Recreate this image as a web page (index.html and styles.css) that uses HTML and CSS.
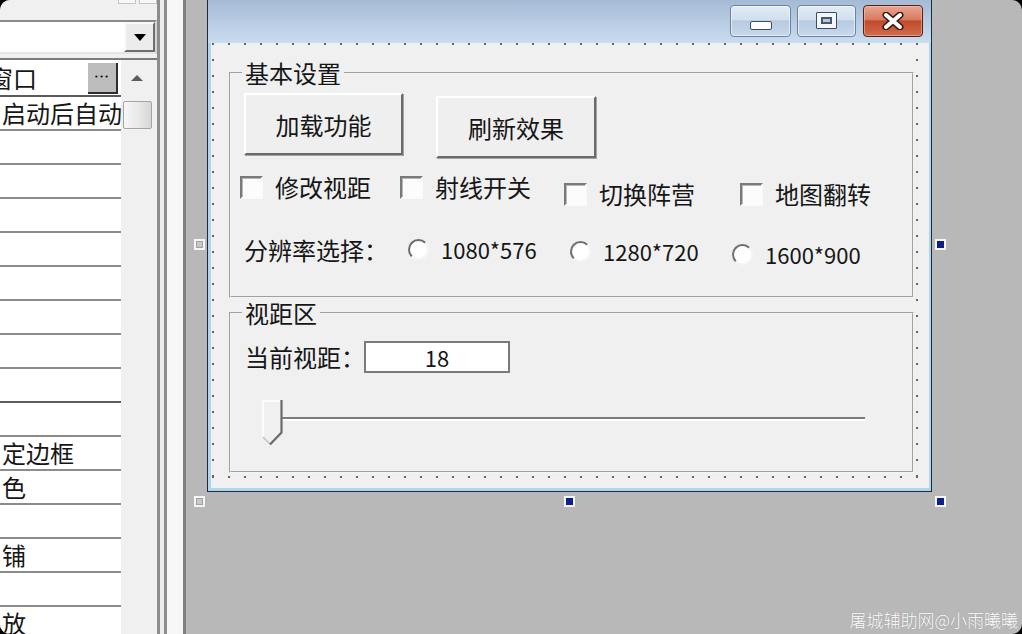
FILE: index.html
```html
<!DOCTYPE html>
<html lang="zh-CN">
<head>
  <meta charset="UTF-8">
  <title>窗口设计器</title>
  <meta name="viewport" content="width=device-width, initial-scale=1.0">
  <link rel="stylesheet" href="styles.css">
</head>
<body>
  <div class="screen">
    <aside class="props">
      <div class="props-main">
        <div class="tool-strip"><span></span><span></span></div>
        <div class="combo">
          <div class="combo-field"></div>
          <div class="combo-btn"><span class="tri-down"></span></div>
        </div>
        <div class="grid">
          <div class="rows">
            <div class="row row-first"><span class="val val-cut">窗口</span><span class="ellipsis">•••</span></div>
            <div class="row"><span class="val">启动后自动</span></div>
            <div class="row"></div>
            <div class="row"></div>
            <div class="row"></div>
            <div class="row"></div>
            <div class="row"></div>
            <div class="row"></div>
            <div class="row"></div>
            <div class="row row-dark"></div>
            <div class="row"></div>
            <div class="row"><span class="val">定边框</span></div>
            <div class="row"><span class="val">色</span></div>
            <div class="row"></div>
            <div class="row"><span class="val">铺</span></div>
            <div class="row"></div>
            <div class="row"><span class="val">放</span></div>
          </div>
          <div class="vscroll">
            <div class="sb-up"><span class="tri-up"></span></div>
            <div class="sb-thumb"></div>
          </div>
        </div>
      </div>
      <div class="splitter"></div>
    </aside>

    <main class="canvas">
      <div class="form">
        <div class="titlebar">
          <button class="cap cap-min"><span class="min-glyph"></span></button>
          <button class="cap cap-max"><span class="max-glyph"><span></span></span></button>
          <button class="cap cap-close">
            <svg width="26" height="18" viewBox="0 0 26 18">
              <path d="M6 3 L20 15 M20 3 L6 15" stroke="#3a1e18" stroke-width="7" stroke-linecap="round"/>
              <path d="M6 3 L20 15 M20 3 L6 15" stroke="#ffffff" stroke-width="4" stroke-linecap="round"/>
            </svg>
          </button>
        </div>
        <div class="client">
          <div class="design">
            <fieldset class="group group-basic">
              <legend>基本设置</legend>
              <div class="btn-row">
                <button class="btn">加载功能</button>
                <button class="btn btn-refresh">刷新效果</button>
              </div>
              <div class="check-row">
                <label class="check"><input type="checkbox">修改视距</label>
                <label class="check"><input type="checkbox">射线开关</label>
                <label class="check"><input type="checkbox">切换阵营</label>
                <label class="check"><input type="checkbox">地图翻转</label>
              </div>
              <div class="radio-row">
                <span class="radio-title">分辨率选择：</span>
                <label class="radio"><input type="radio" name="res">1080*576</label>
                <label class="radio"><input type="radio" name="res">1280*720</label>
                <label class="radio"><input type="radio" name="res">1600*900</label>
              </div>
            </fieldset>

            <fieldset class="group group-view">
              <legend>视距区</legend>
              <div class="view-row">
                <span class="view-label">当前视距：</span>
                <input class="field" type="text" value="18" readonly>
              </div>
              <div class="slider">
                <svg class="thumb" width="21" height="45" viewBox="0 0 21 45">
                  <polygon points="1,1 19,1 19,32 8,44 1,37" fill="#f0f0f0"/>
                  <path d="M1 37 L1 1 L19 1" stroke="#ffffff" stroke-width="1.5" fill="none"/>
                  <path d="M1 37 L8 44" stroke="#c4c4c4" stroke-width="1.5" fill="none"/>
                  <path d="M19.5 0 L19.5 32.5 L8 44.5" stroke="#6a6a6a" stroke-width="2.2" fill="none"/>
                </svg>
                <div class="track"></div>
              </div>
            </fieldset>
          </div>
        </div>

        <span class="handle handle-grey handle-lm"></span>
        <span class="handle handle-rm"></span>
        <span class="handle handle-grey handle-lb"></span>
        <span class="handle handle-mb"></span>
        <span class="handle handle-rb"></span>
      </div>

      <div class="watermark">屠城辅助网@小雨曦曦</div>
    </main>
  </div>
</body>
</html>
```

FILE: styles.css
```css
body {
  margin: 0;
  background: #000;
  font-family: "Noto Sans CJK SC", "Noto Sans", sans-serif;
  color: #161616;
}

.screen {
  width: 1022px;
  height: 634px;
  display: flex;
  border-radius: 10px;
  overflow: hidden;
  background: #b8b8b8;
  position: relative;
}

/* 左侧属性面板 */
.props {
  display: flex;
  flex: none;
}

.props-main {
  width: 157px;
  background: #f0f0f0;
  display: flex;
  flex-direction: column;
  overflow: hidden;
}

.tool-strip {
  height: 4px;
  display: flex;
  gap: 3px;
  padding-left: 118px;
}

.tool-strip span {
  width: 22px;
  height: 3px;
  border: 1px solid #c4c4c4;
  border-top: none;
  background: #f7f7f7;
}

.combo {
  margin-top: 16px;
  width: 155px;
  height: 30px;
  display: flex;
  border-top: 2px solid #8a8a8a;
  border-right: 2px solid #d4d4d4;
  border-bottom: 2px solid #e4e4e4;
  box-sizing: content-box;
}

.combo-field {
  flex: 1;
  background: #fff;
}

.combo-btn {
  width: 31px;
  box-sizing: border-box;
  border: 2px solid;
  border-color: #fafafa #6e6e6e #6e6e6e #fafafa;
  background: #ececec;
  display: flex;
  align-items: center;
  justify-content: center;
}

.tri-down {
  width: 0;
  height: 0;
  border-left: 6px solid transparent;
  border-right: 6px solid transparent;
  border-top: 7px solid #000;
}

.grid {
  margin-top: 4px;
  border-top: 2px solid #7c7c7c;
  display: flex;
  flex: 1;
  overflow: hidden;
}

.rows {
  width: 121px;
  background: #fff;
  flex: none;
}

.row {
  height: 32px;
  border-bottom: 2px solid #8c8c8c;
  font-size: 24px;
  line-height: 32px;
  padding-left: 2px;
  white-space: nowrap;
  display: flex;
}

.row-first {
  height: 35px;
  line-height: 35px;
  border-bottom-color: #5a5a5a;
  overflow: hidden;
}

.row-dark {
  border-bottom-color: #5e5e5e;
}

.val-cut {
  margin-left: -13px;
}

.ellipsis {
  margin: 3px 3px 0 auto;
  width: 30px;
  height: 31px;
  box-sizing: border-box;
  background: #bdbdbd;
  border-right: 2px solid #2e2e2e;
  border-bottom: 2px solid #2e2e2e;
  font-family: "DejaVu Sans", sans-serif;
  font-size: 7px;
  line-height: 29px;
  text-align: center;
  letter-spacing: 1px;
  color: #000;
}

.vscroll {
  width: 32px;
  margin-left: 1px;
  display: flex;
  flex-direction: column;
}

.sb-up {
  height: 36px;
  display: flex;
  align-items: center;
  justify-content: center;
  padding-right: 2px;
}

.tri-up {
  width: 0;
  height: 0;
  border-left: 6px solid transparent;
  border-right: 6px solid transparent;
  border-bottom: 6px solid #5c5c5c;
}

.sb-thumb {
  margin: 5px 0 0 1px;
  width: 29px;
  height: 28px;
  box-sizing: border-box;
  border: 1px solid #a5a5a5;
  border-radius: 2px;
  background: linear-gradient(to right, #f7f7f7, #e6e6e6 60%, #d6d6d6);
}

.splitter {
  width: 29px;
  background: linear-gradient(to right,
    #8d8d8d 0 3px, #ececec 3px 7px, #8d8d8d 7px 10px,
    #f7f7f7 10px 26px, #7f7f7f 26px 29px);
}

/* 设计画布 */
.canvas {
  flex: 1;
  padding-left: 21px;
  position: relative;
}

.form {
  position: relative;
  margin-top: -4px;
  width: 725px;
  height: 496px;
  box-sizing: border-box;
  border: 1px solid #1c2c3c;
  border-top: none;
  background: linear-gradient(#a1b7d2, #cadcf0 47px, #aed5ec 47px);
  display: flex;
  flex-direction: column;
}

.titlebar {
  height: 47px;
  box-sizing: border-box;
  display: flex;
  justify-content: flex-end;
  align-items: flex-start;
  gap: 6px;
  padding: 9px 8px 0 0;
}

.cap {
  height: 32px;
  padding: 0;
  border: 1px solid #6b82a3;
  border-radius: 4px;
  background: linear-gradient(#e3ecf7, #d2dfee 45%, #b6cae1 50%, #c8d9ec);
  box-shadow: inset 0 0 0 1px rgba(255, 255, 255, 0.55);
  display: flex;
  align-items: center;
  justify-content: center;
}

.cap-min {
  width: 61px;
}

.cap-max {
  width: 59px;
}

.cap-close {
  width: 60px;
  margin-left: 1px;
  border-color: #4f2219;
  background: linear-gradient(#e9a591, #d87b60 45%, #c14a2b 50%, #d06c4d);
  box-shadow: inset 0 0 0 1px rgba(255, 210, 190, 0.45);
}

.min-glyph {
  margin-top: 8px;
  width: 22px;
  height: 9px;
  box-sizing: border-box;
  border: 1px solid #3c4c62;
  border-radius: 2px;
  background: #fdfdfd;
}

.max-glyph {
  margin-top: -2px;
  width: 21px;
  height: 17px;
  box-sizing: border-box;
  border: 1px solid #3c4c62;
  border-radius: 1px;
  background: #f4f7fb;
  display: flex;
  align-items: center;
  justify-content: center;
}

.max-glyph span {
  width: 11px;
  height: 7px;
  box-sizing: border-box;
  border: 2px solid #4a586c;
  background: #b9c7d8;
}

.client {
  flex: 1;
  margin: 0 2px 3px 3px;
  background: #f0f0f0;
}

.design {
  margin-left: 1px;
  width: 706px;
  height: 435px;
  box-sizing: border-box;
  padding-top: 17px;
  background:
    radial-gradient(circle at 1px 1px, #666 1.1px, transparent 1.6px) 0 0 / 16px 2px repeat-x,
    radial-gradient(circle at 1px 1px, #666 1.1px, transparent 1.6px) 0 100% / 16px 2px repeat-x,
    radial-gradient(circle at 1px 1px, #666 1.1px, transparent 1.6px) 0 0 / 2px 16px repeat-y,
    radial-gradient(circle at 1px 1px, #666 1.1px, transparent 1.6px) 100% 0 / 2px 16px repeat-y;
}

.group {
  margin: 0 0 0 17px;
  width: 685px;
  box-sizing: border-box;
  padding: 0;
  border: 2px groove #f4f4f4;
}

.group legend {
  margin-left: 11px;
  padding: 0 3px;
  font-size: 24px;
  line-height: 26px;
}

.group-basic {
  height: 238px;
}

.group-view {
  height: 173px;
  margin-top: 2px;
}

.btn-row {
  display: flex;
  align-items: flex-start;
  padding: 7px 0 0 13px;
}

.btn {
  width: 159px;
  height: 62px;
  box-sizing: border-box;
  border: 2px solid;
  border-color: #fff #6b6b6b #6b6b6b #fff;
  background: #efefef;
  box-shadow: 1px 1px 0 #a4a4a4;
  font: inherit;
  font-size: 24px;
  color: #161616;
  padding: 0;
}

.btn-refresh {
  width: 160px;
  margin: 3px 0 0 33px;
}

.check-row {
  display: flex;
  align-items: flex-start;
  padding: 17px 0 0 9px;
}

.check {
  display: flex;
  align-items: center;
  gap: 12px;
  font-size: 24px;
  line-height: 24px;
  white-space: nowrap;
}

.check:nth-child(2) {
  margin-left: 29px;
}

.check:nth-child(3) {
  margin: 7px 0 0 33px;
}

.check:nth-child(4) {
  margin: 7px 0 0 45px;
}

.check input {
  appearance: none;
  margin: 0;
  width: 23px;
  height: 23px;
  box-sizing: border-box;
  border: 2px solid;
  border-color: #7a7a7a #fbfbfb #fbfbfb #7a7a7a;
  background: #fcfcfc;
  box-shadow: inset 1px 1px 0 #b8b8b8;
}

.radio-row {
  display: flex;
  align-items: flex-start;
  padding: 32px 0 0 13px;
}

.radio-title {
  font-size: 24px;
  line-height: 24px;
  width: 144px;
  margin-right: 20px;
  white-space: nowrap;
}

.radio {
  width: 162px;
  height: 22px;
  display: flex;
  align-items: center;
  gap: 12px;
  font-size: 22px;
  line-height: 22px;
  white-space: nowrap;
}

.radio:nth-child(3) {
  margin-top: 2px;
}

.radio:nth-child(4) {
  margin-top: 5px;
}

.radio input {
  appearance: none;
  margin: 0;
  width: 21px;
  height: 21px;
  box-sizing: border-box;
  border-radius: 50%;
  border: 2px solid;
  border-color: #6e6e6e #f6f6f6 #f6f6f6 #6e6e6e;
  background: #fff;
}

.view-row {
  display: flex;
  align-items: center;
  padding: 15px 0 0 14px;
}

.view-label {
  font-size: 24px;
  line-height: 24px;
  width: 119px;
  flex: none;
  white-space: nowrap;
}

.field {
  width: 146px;
  height: 32px;
  box-sizing: border-box;
  border: 2px solid #7a7a7a;
  background: #fff;
  font: inherit;
  font-size: 22px;
  color: #161616;
  text-align: center;
  padding: 0;
}

.slider {
  display: flex;
  align-items: flex-start;
  padding: 27px 0 0 31px;
}

.thumb {
  position: relative;
  z-index: 1;
  flex: none;
}

.track {
  width: 590px;
  height: 2px;
  background: #7d7d7d;
  border-bottom: 2px solid #fff;
  margin: 17px 0 0 -8px;
}

/* 选择句柄 */
.handle {
  position: absolute;
  width: 11px;
  height: 11px;
  box-sizing: border-box;
  border: 2px solid #f6f6f6;
  background: #0c1f8a;
}

.handle-grey {
  background: #c8c8c8;
  box-shadow: inset 0 0 0 1px #a2a2a2;
}

.handle-lm { left: -14px; top: 243px; }
.handle-rm { right: -15px; top: 243px; }
.handle-lb { left: -14px; bottom: -16px; }
.handle-mb { left: calc(50% - 6px); bottom: -16px; }
.handle-rb { right: -15px; bottom: -16px; }

.watermark {
  position: absolute;
  right: 4px;
  bottom: 4px;
  color: #fff;
  font-size: 17px;
  line-height: 20px;
  font-weight: 300;
  text-shadow: 0 0 1px rgba(0, 0, 0, 0.25);
}
```
